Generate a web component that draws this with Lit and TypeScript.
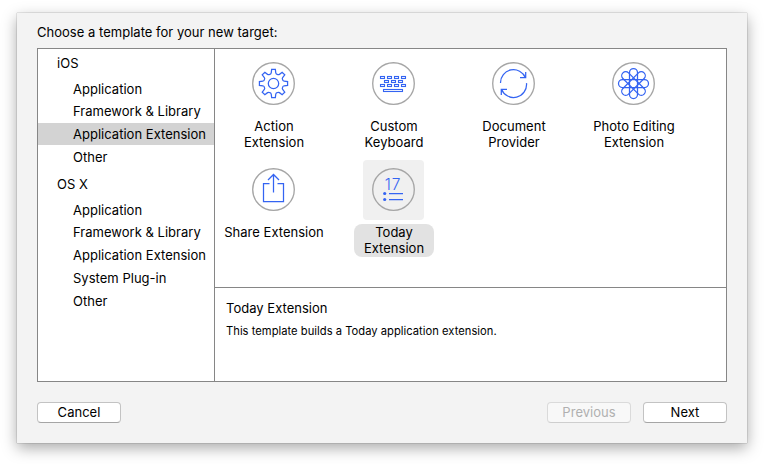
import { LitElement, html, css, svg, nothing } from "lit";
import { customElement } from "lit/decorators.js";
import { classMap } from "lit/directives/class-map.js";

const gearPath = (): string => {
  const pts: string[] = [];
  for (let i = 0; i < 8; i++) {
    const base = (i * 45 - 90) * (Math.PI / 180);
    const at = (r: number, deg: number) => {
      const a = base + (deg * Math.PI) / 180;
      return `${(r * Math.cos(a)).toFixed(2)} ${(r * Math.sin(a)).toFixed(2)}`;
    };
    pts.push(`${i === 0 ? "M" : "L"}${at(10.9, -12)}L${at(14.2, -7.5)}L${at(14.2, 7.5)}L${at(10.9, 12)}Q${at(9.6, 16)} ${at(9.9, 22.5)}Q${at(9.6, 29)} ${at(10.9, 33)}`);
  }
  return pts.join("") + "Z";
};

const keyRow = (xs: number[], y: number) =>
  xs.map((x) => svg`<rect class="key" x=${x} y=${y} width="4" height="2"></rect>`);

const glyphs: Record<string, unknown> = {
  gear: svg`<path d=${gearPath()}></path><circle r="5.2"></circle>`,
  keyboard: svg`
    ${keyRow([-13, -6, 1, 8], -7)}
    ${keyRow([-9, -2, 5], -3)}
    ${keyRow([-13, -6, 1, 8], 1)}
    <rect class="key" x="-10" y="6" width="19" height="2"></rect>`,
  sync: svg`
    <path d="M-13-.6A13 13 0 0 1 12-5.8M12.2-11.5V-5.8H6.5"></path>
    <path d="M13-.4A13 13 0 0 1-12 5.8M-12.2 11.5V5.8H-6.5"></path>`,
  flower: svg`${[0, 45, 90, 135].map(
    (a) => svg`<rect x="-4" y="-15" width="8" height="30" rx="4" transform="rotate(${a})"></rect>`,
  )}`,
  share: svg`<path d="M-4-6H-10V12H10V-6H4M0 3V-15M-5.5-9.5L0-15L5.5-9.5"></path>`,
  today: svg`
    <text class="day" x="-.5" y="0" text-anchor="middle">17</text>
    <circle class="dot" cx="-8.8" cy="4" r="1.6"></circle>
    <circle class="dot" cx="-8.8" cy="10" r="1.6"></circle>
    <path d="M-4.5 4H9.5M-4.5 10H9.5"></path>`,
};

interface Template {
  icon: string;
  lines: string[];
  selected?: boolean;
}

const templates: Template[] = [
  { icon: "gear", lines: ["Action", "Extension"] },
  { icon: "keyboard", lines: ["Custom", "Keyboard"] },
  { icon: "sync", lines: ["Document", "Provider"] },
  { icon: "flower", lines: ["Photo Editing", "Extension"] },
  { icon: "share", lines: ["Share Extension"] },
  { icon: "today", lines: ["Today", "Extension"], selected: true },
];

const groups = [
  { name: "iOS", items: ["Application", "Framework & Library", "Application Extension", "Other"], selected: 2 },
  { name: "OS X", items: ["Application", "Framework & Library", "Application Extension", "System Plug-in", "Other"], selected: -1 },
];

@customElement("template-icon")
class TemplateIcon extends LitElement {
  static properties = { name: {} };
  declare name: string;

  static styles = css`
    :host { display: block; }
    svg { display: block; }
    .ring { fill: #fff; stroke: #a6a6a6; stroke-width: 1.35; }
    :host([selected]) .ring { fill: #f0f0f0; }
    .glyph { fill: none; stroke: #3464f2; stroke-width: 1.25; }
    .key { stroke-width: 1.1; }
    .day { font: 300 15.5px Inter, sans-serif; letter-spacing: 0.8px; fill: #3464f2; stroke: none; }
    .dot { fill: #3464f2; stroke: none; }
  `;

  render() {
    return html`<svg width="61" height="60" viewBox="-30.5 -29.5 61 60">
      <circle class="ring" r="20.8"></circle>
      <g class="glyph">${glyphs[this.name]}</g>
    </svg>`;
  }
}

@customElement("app-root")
class AppRoot extends LitElement {
  static styles = css`
    :host {
      display: block;
      box-sizing: border-box;
      width: 764px;
      height: 464px;
      padding: 13px 17px 21px;
      background: #fff;
      overflow: hidden;
      font: 13px/16px Inter, "Liberation Sans", Arial, sans-serif;
      letter-spacing: 0.02px;
      color: #000;
    }
    .dialog {
      box-sizing: border-box;
      height: 430px;
      padding: 11px 20px 20px;
      background: #f3f3f3;
      display: flex;
      flex-direction: column;
      box-shadow: 0 0 1px rgba(0, 0, 0, 0.5), 0 5px 14px rgba(0, 0, 0, 0.34);
    }
    .title { height: 24px; line-height: 17px; white-space: nowrap; }
    .panel {
      box-sizing: border-box;
      height: 334px;
      border: 1px solid #868686;
      background: #fff;
      display: flex;
    }
    .sidebar {
      box-sizing: border-box;
      width: 177px;
      border-right: 1px solid #868686;
    }
    .group { padding-bottom: 1px; }
    .heading { height: 29px; line-height: 29px; padding-left: 19px; }
    .row {
      height: 22px;
      line-height: 23px;
      padding-left: 35px;
      margin-bottom: 1px;
      white-space: nowrap;
    }
    .row.first { margin-bottom: 0; }
    .row.selected { background: #d3d3d3; }
    .main { flex: 1; display: flex; flex-direction: column; }
    .grid {
      height: 233px;
      box-sizing: content-box;
      padding-top: 5px;
      margin-left: -1px;
      display: grid;
      grid-template-columns: repeat(4, 120px);
      grid-auto-rows: 106px;
    }
    .item { display: flex; flex-direction: column; align-items: center; }
    .tile { margin-right: 1px; border-radius: 4px; }
    .selected .tile { background: #f0f0f0; }
    .label {
      box-sizing: border-box;
      min-width: 80px;
      margin-top: 4px;
      padding-bottom: 1px;
      border-radius: 8px;
      text-align: center;
      white-space: nowrap;
    }
    .selected .label { background: #e2e2e2; }
    .detail { flex: 1; border-top: 1px solid #868686; padding: 12px 11px; }
    .desc { margin-top: 7px; font-size: 11.2px; }
    .buttons { margin-top: 20px; display: flex; gap: 12px; }
    .button {
      box-sizing: border-box;
      width: 84px;
      height: 21px;
      padding: 0;
      border: 1px solid #c3c3c3;
      border-bottom-color: #a5a5a5;
      border-radius: 4px;
      background: #fff;
      font: inherit;
      letter-spacing: inherit;
      line-height: 19px;
      color: #000;
      text-align: center;
    }
    .push { margin-left: auto; }
    .button:disabled {
      background: #f8f8f8;
      border-color: #dadada;
      border-bottom-color: #cecece;
      color: #b0b0b0;
    }
  `;

  render() {
    return html`
      <div class="dialog">
        <div class="title">Choose a template for your new target:</div>
        <div class="panel">
          <div class="sidebar">
            ${groups.map((g) => html`
              <div class="group">
                <div class="heading">${g.name}</div>
                ${g.items.map((t, i) => html`<div class=${classMap({ row: true, first: i === 0, selected: i === g.selected })}>${t}</div>`)}
              </div>`)}
          </div>
          <div class="main">
            <div class="grid">
              ${templates.map((t) => html`
                <div class=${classMap({ item: true, selected: !!t.selected })}>
                  <div class="tile"><template-icon .name=${t.icon} ?selected=${!!t.selected}></template-icon></div>
                  <div class="label">${t.lines.map((l, i) => html`${i ? html`<br>` : nothing}${l}`)}</div>
                </div>`)}
            </div>
            <div class="detail">
              <div>Today Extension</div>
              <div class="desc">This template builds a Today application extension.</div>
            </div>
          </div>
        </div>
        <div class="buttons">
          <button class="button">Cancel</button>
          <button class="button push" disabled>Previous</button>
          <button class="button">Next</button>
        </div>
      </div>`;
  }
}
